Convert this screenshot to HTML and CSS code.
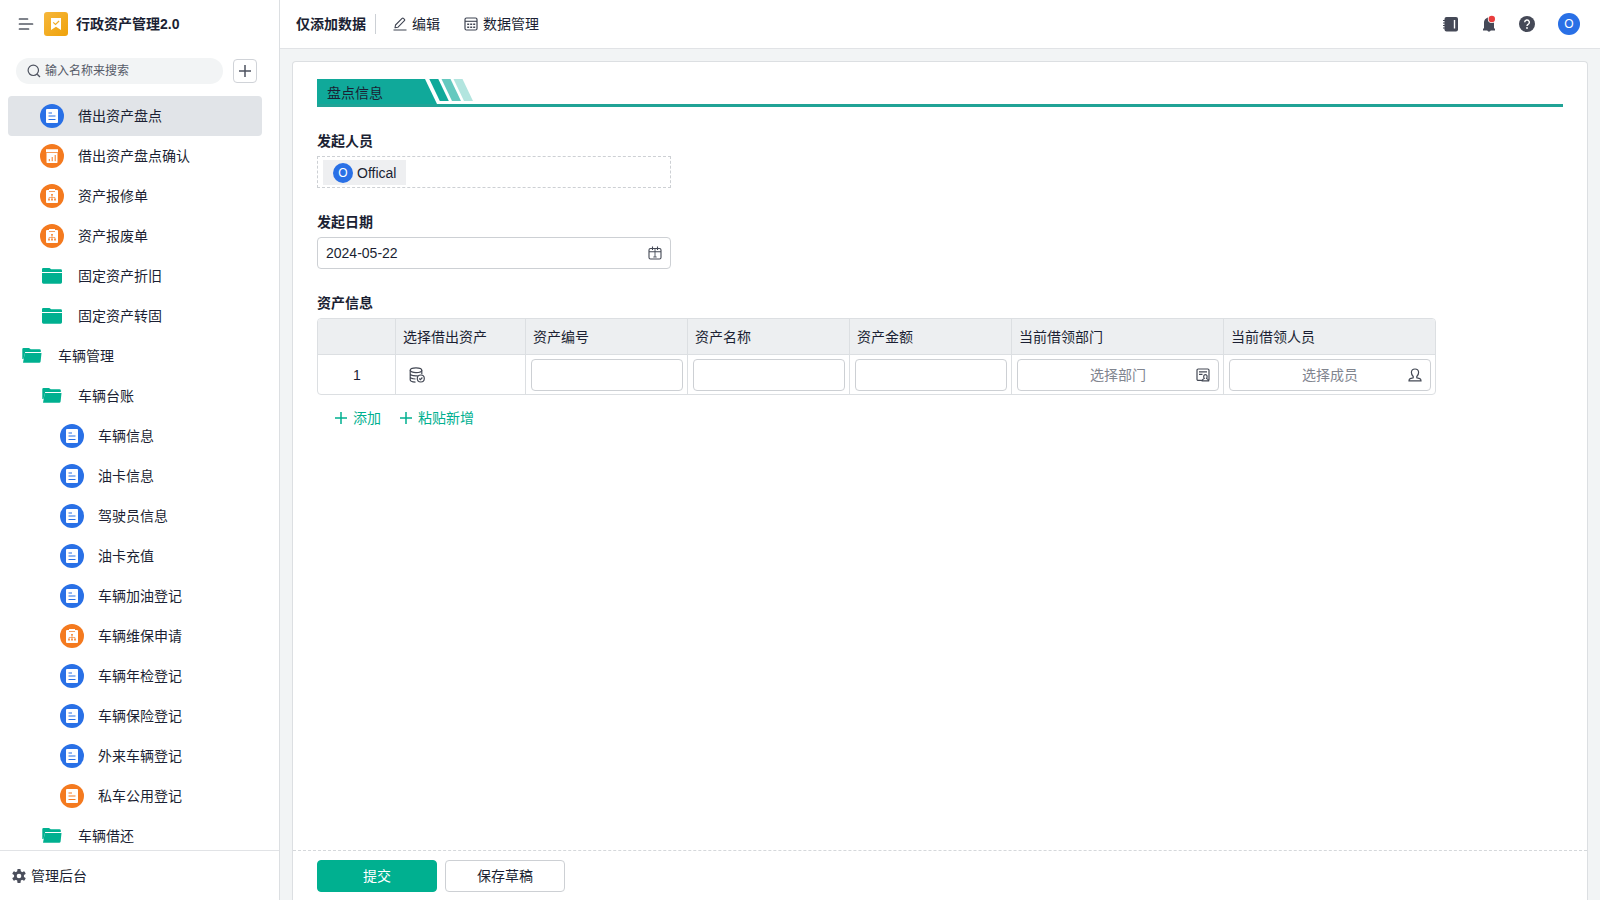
FILE: index.html
```html
<!DOCTYPE html>
<html lang="zh-CN">
<head>
<meta charset="utf-8">
<meta name="viewport" content="width=device-width, initial-scale=1">
<title>行政资产管理2.0</title>
<link rel="stylesheet" href="styles.css">
</head>
<body>
<svg class="sprite" aria-hidden="true">
  <symbol id="i-form" viewBox="0 0 24 24">
    <circle cx="12" cy="12" r="12" fill="currentColor"/>
    <rect x="6" y="5" width="12" height="14" rx="1" fill="#fff"/>
    <path d="M8.500 9h3.500M8.500 12h7M8.500 15.500h7" stroke="currentColor" stroke-width="1.200" fill="none"/>
  </symbol>
  <symbol id="i-chart" viewBox="0 0 24 24">
    <circle cx="12" cy="12" r="12" fill="currentColor"/>
    <path d="M6 5.200h12v3H6zM6.500 9h11v9.300a.8.8 0 0 1-.8.8H7.300a.8.8 0 0 1-.8-.8z" fill="#fff"/>
    <path d="M9.300 15v2.200M12.200 13v4.200M15.200 11v6.200" stroke="currentColor" stroke-width="1" fill="none"/>
  </symbol>
  <symbol id="i-flow" viewBox="0 0 24 24">
    <circle cx="12" cy="12" r="12" fill="currentColor"/>
    <rect x="6" y="6" width="12" height="13" rx="1" fill="#fff"/>
    <rect x="9" y="5" width="6" height="2" fill="#fff"/>
    <path d="M9 7.500h6" stroke="currentColor" stroke-width=".7"/>
    <path d="M12 11v4M9 15v-1.500h6V15" stroke="currentColor" stroke-width=".6" fill="none"/>
    <path d="M11.200 10h1.600v1.600h-1.600zM8.200 14.800h1.600v1.600H8.200zM11.200 14.800h1.600v1.600h-1.600zM14.200 14.800h1.600v1.600h-1.600z" fill="currentColor"/>
  </symbol>
  <symbol id="i-folder" viewBox="0 0 24 24">
    <path d="M2 8V5.200A1.200 1.200 0 0 1 3.200 4h6.300l1.700 1.300h9.300A1.400 1.400 0 0 1 22 6.700V8z" fill="currentColor"/>
    <path d="M2 9h20v9.300a1.400 1.400 0 0 1-1.400 1.400H3.400A1.400 1.400 0 0 1 2 18.300z" fill="currentColor"/>
  </symbol>
  <symbol id="i-open" viewBox="0 0 24 24">
    <path d="M2.300 15V5.200A1.200 1.200 0 0 1 3.500 4h5.500l1.700 1.300h8.800A1.300 1.300 0 0 1 20.800 6.600V8H5.200L3.500 15z" fill="currentColor"/>
    <path d="M4.800 9h16.700l-.9 8.600a1.400 1.400 0 0 1-1.400 1.200H3z" fill="currentColor"/>
  </symbol>
  <symbol id="i-plus" viewBox="0 0 14 14"><path d="M7 1v12M1 7h12" stroke="currentColor" stroke-width="1.500" fill="none"/></symbol>
</svg>
<div class="app">
  <aside class="sidebar">
    <div class="brand">
      <button class="icon-btn" aria-label="收起菜单"><svg width="16" height="14" viewBox="0 0 16 14"><path d="M1.500 2h8M1.500 7h13M1.500 12h9" stroke="#565b66" stroke-width="1.700" stroke-linecap="round"/></svg></button>
      <svg class="logo" width="24" height="24" viewBox="0 0 24 24"><defs><linearGradient id="gold" x1="0" y1="0" x2="1" y2="1"><stop stop-color="#f6b73c"/><stop offset="1" stop-color="#efa20a"/></linearGradient></defs><rect width="24" height="24" rx="3" fill="url(#gold)"/><path d="M7 6h10v12l-5-3.200L7 18z" fill="#fff"/><path d="M9.200 10.300l2.300 2.200 3.600-3.500" stroke="#f0ab24" stroke-width="1.100" fill="none"/></svg>
      <h1 class="brand-name">行政资产管理2.0</h1>
    </div>
    <div class="search-row">
      <label class="search">
        <svg width="14" height="14" viewBox="0 0 14 14"><circle cx="6.300" cy="6.300" r="5.200" fill="none" stroke="#4e5360" stroke-width="1.200"/><path d="M10.200 10.200L13 13" stroke="#4e5360" stroke-width="1.300"/></svg>
        <input class="search-input" type="text" placeholder="输入名称来搜索" aria-label="搜索">
      </label>
      <button class="add-btn" aria-label="新建"><svg width="14" height="14"><use href="#i-plus"/></svg></button>
    </div>
    <nav class="tree">
      <a class="item level-2 active" href="#"><svg class="ico blue"><use href="#i-form"/></svg>借出资产盘点</a>
      <a class="item level-2" href="#"><svg class="ico orange"><use href="#i-chart"/></svg>借出资产盘点确认</a>
      <a class="item level-2" href="#"><svg class="ico orange"><use href="#i-flow"/></svg>资产报修单</a>
      <a class="item level-2" href="#"><svg class="ico orange"><use href="#i-flow"/></svg>资产报废单</a>
      <a class="item level-2" href="#"><svg class="ico green"><use href="#i-folder"/></svg>固定资产折旧</a>
      <a class="item level-2" href="#"><svg class="ico green"><use href="#i-folder"/></svg>固定资产转固</a>
      <a class="item level-1" href="#"><svg class="ico green"><use href="#i-open"/></svg>车辆管理</a>
      <a class="item level-2" href="#"><svg class="ico green"><use href="#i-open"/></svg>车辆台账</a>
      <a class="item level-3" href="#"><svg class="ico blue"><use href="#i-form"/></svg>车辆信息</a>
      <a class="item level-3" href="#"><svg class="ico blue"><use href="#i-form"/></svg>油卡信息</a>
      <a class="item level-3" href="#"><svg class="ico blue"><use href="#i-form"/></svg>驾驶员信息</a>
      <a class="item level-3" href="#"><svg class="ico blue"><use href="#i-form"/></svg>油卡充值</a>
      <a class="item level-3" href="#"><svg class="ico blue"><use href="#i-form"/></svg>车辆加油登记</a>
      <a class="item level-3" href="#"><svg class="ico orange"><use href="#i-flow"/></svg>车辆维保申请</a>
      <a class="item level-3" href="#"><svg class="ico blue"><use href="#i-form"/></svg>车辆年检登记</a>
      <a class="item level-3" href="#"><svg class="ico blue"><use href="#i-form"/></svg>车辆保险登记</a>
      <a class="item level-3" href="#"><svg class="ico blue"><use href="#i-form"/></svg>外来车辆登记</a>
      <a class="item level-3" href="#"><svg class="ico orange"><use href="#i-form"/></svg>私车公用登记</a>
      <a class="item level-2" href="#"><svg class="ico green"><use href="#i-open"/></svg>车辆借还</a>
    </nav>
    <a class="admin" href="#">
      <svg width="14" height="14" viewBox="0 0 14 14"><g fill="#4b4f5c"><circle cx="7" cy="7" r="5"/><rect x="5.300" y="0" width="3.400" height="14" rx=".8"/><rect x="5.300" y="0" width="3.400" height="14" rx=".8" transform="rotate(60 7 7)"/><rect x="5.300" y="0" width="3.400" height="14" rx=".8" transform="rotate(120 7 7)"/></g><circle cx="7" cy="7" r="2.300" fill="#fff"/></svg>
      管理后台
    </a>
  </aside>
  <div class="main">
    <header class="topbar">
      <h2 class="mode">仅添加数据</h2>
      <button class="tool"><svg width="14" height="14" viewBox="0 0 14 14"><path d="M.5 13h13M2 10.800l.5-2.800 6.600-6.600a1 1 0 0 1 1.400 0l.9.9a1 1 0 0 1 0 1.400L4.800 10.300z" fill="none" stroke="#3f4452" stroke-width="1.100" stroke-linejoin="round"/></svg>编辑</button>
      <button class="tool"><svg width="14" height="14" viewBox="0 0 14 14"><rect x="1" y="1" width="12" height="12" rx="1.500" fill="none" stroke="#3f4452" stroke-width="1.200"/><path d="M1 4.300h12" stroke="#3f4452" stroke-width="1.100"/><path d="M3.200 7.200h2m1 0h2m1 0h2M3.200 10.200h2m1 0h2m1 0h2" stroke="#3f4452" stroke-width="1.500"/></svg>数据管理</button>
      <div class="actions">
        <button class="icon-btn" aria-label="通讯录"><svg width="16" height="16" viewBox="0 0 16 16"><rect x="1.500" y="1" width="13.500" height="14.500" rx="2" fill="#454957"/><path d="M0 4.500H3M0 7H3M0 9.500H3M0 12H3" stroke="#454957" stroke-width="1.200"/><path d="M11.500 4v8.500" stroke="#fff" stroke-width="1.400"/></svg></button>
        <button class="icon-btn" aria-label="通知"><svg width="16" height="18" viewBox="0 0 16 18"><path d="M8 2.500C5 2.500 3 4.800 3 7.700V13L2 14v1.500h4.200a2 2 0 0 0 3.600 0H14V14L13 13V7.700C13 4.800 11 2.500 8 2.500z" fill="#454957"/><circle cx="10.800" cy="4" r="4" fill="#fff"/><circle cx="10.800" cy="4" r="3.200" fill="#e93d3d"/></svg></button>
        <button class="icon-btn" aria-label="帮助"><svg width="16" height="16" viewBox="0 0 16 16"><circle cx="8" cy="8" r="8" fill="#454957"/><path d="M5.700 6.300a2.300 2.300 0 1 1 3.400 2c-.8.500-1.100.8-1.100 1.700" fill="none" stroke="#fff" stroke-width="1.400"/><circle cx="8" cy="12" r=".9" fill="#fff"/></svg></button>
        <button class="avatar avatar-user" aria-label="账户">O</button>
      </div>
    </header>
    <main class="page">
      <form class="card">
        <div class="fields">
          <div class="banner"><h3 class="banner-title">盘点信息</h3><svg width="48" height="25" viewBox="0 0 48 25"><path d="M0 0l12 25H0z" fill="#10a99a"/><path d="M4.300 0h9l10.500 22h-9z" fill="#10a99a"/><path d="M16.500 0h9l10.500 22h-9z" fill="#65c9bf"/><path d="M28.500 0h9L48 22h-9z" fill="#b2e5df"/></svg></div>
          <section class="field">
            <h4 class="label">发起人员</h4>
            <div class="people"><span class="chip"><span class="avatar">O</span>Offical</span></div>
          </section>
          <section class="field">
            <label class="label" for="date">发起日期</label>
            <div class="control date-box">
              <input class="input" id="date" type="text" value="2024-05-22">
              <svg width="14" height="14" viewBox="0 0 14 14" fill="none" stroke="#444955" stroke-width="1.100"><rect x="1" y="2.500" width="12" height="10.500" rx="1.500"/><path d="M1 5.700h12M4.500.5v3.500M9.500.5v3.500"/><path d="M7 2.500v8.500M5.300 11h3.400" stroke-width=".9"/></svg>
            </div>
          </section>
          <section class="field">
            <h4 class="label">资产信息</h4>
            <div class="table-wrap">
            <table class="grid">
              <colgroup><col class="c-no"><col class="c-pick"><col class="c-text"><col class="c-text"><col class="c-text"><col class="c-member"><col class="c-member"></colgroup>
              <thead><tr><th></th><th>选择借出资产</th><th>资产编号</th><th>资产名称</th><th>资产金额</th><th>当前借领部门</th><th>当前借领人员</th></tr></thead>
              <tbody><tr>
                <td class="no">1</td>
                <td class="pick"><button class="icon-btn" type="button" aria-label="选择借出资产"><svg width="16" height="16" viewBox="0 0 16 16" fill="none" stroke="#444955" stroke-width="1.200"><ellipse cx="7" cy="3.200" rx="5.800" ry="2.400"/><path d="M1.200 3.200v9.600c0 1.300 2.300 2.200 5.300 2.300M12.800 3.200v4M1.200 6.600c0 1.300 2.600 2.300 5.800 2.300.8 0 1.200 0 1.800-.2M1.200 9.800c0 1.200 2.300 2.100 5.300 2.200"/><circle cx="11.800" cy="11.500" r="3.500"/><path d="M10.200 11.500l1.200 1.200 2-2.200"/></svg></button></td>
                <td><input class="control cell-input" type="text" aria-label="资产编号"></td>
                <td><input class="control cell-input" type="text" aria-label="资产名称"></td>
                <td><input class="control cell-input" type="text" aria-label="资产金额"></td>
                <td><button class="control selector" type="button"><span class="selector-text">选择部门</span><svg width="14" height="14" viewBox="0 0 14 14" fill="none" stroke="#444955" stroke-width="1.200"><path d="M6 12.400H2.200A1.200 1.200 0 0 1 1 11.200V2.200A1.200 1.200 0 0 1 2.200 1h9.600A1.200 1.200 0 0 1 13 2.200v10.200M3 3.800h8M3 6.300h3.500"/><path d="M6.200 12.900c0-1.500 1-2 2-2.400C7.300 9 7.500 6.600 9.400 6.600s2.100 2.400 1.200 3.900c1 .4 2 .9 2 2.400z"/></svg></button></td>
                <td><button class="control selector" type="button"><span class="selector-text">选择成员</span><svg width="14" height="14" viewBox="0 0 14 14" fill="none" stroke="#444955" stroke-width="1.200"><path d="M5.200 8.500C3.800 7 3.300 5.500 3.400 4.300 3.500 2.200 5 1 7 1s3.500 1.200 3.600 3.300c.1 1.200-.4 2.700-1.800 4.200v1.200l3 .9c.8.300 1.200.9 1.200 2.200H1c0-1.300.4-1.900 1.200-2.200l3-.9z"/></svg></button></td>
              </tr></tbody>
            </table>
            </div>
            <div class="links">
              <button class="link-btn" type="button"><svg width="14" height="14"><use href="#i-plus"/></svg>添加</button>
              <button class="link-btn" type="button"><svg width="14" height="14"><use href="#i-plus"/></svg>粘贴新增</button>
            </div>
          </section>
        </div>
        <div class="footer">
          <button class="btn primary" type="button">提交</button>
          <button class="btn" type="button">保存草稿</button>
        </div>
      </form>
    </main>
  </div>
</div>
</body>
</html>
```

FILE: styles.css
```css
* { box-sizing: border-box; }
body {
  margin: 0;
  font: 14px/20px "Liberation Sans", "Noto Sans CJK SC", sans-serif;
  color: #1b1f33;
  background: #f2f4f5;
}
h1, h2, h3, h4 { margin: 0; font-size: 14px; }
button, input { font: inherit; color: inherit; }
button { border: 0; padding: 0; background: none; cursor: pointer; }
a { color: inherit; text-decoration: none; }
svg { flex: none; display: block; }
.sprite { position: absolute; width: 0; height: 0; }

.app { display: flex; height: 100vh; }

/* Sidebar */
.sidebar {
  flex: none;
  display: flex;
  flex-direction: column;
  width: 280px;
  background: #fff;
  border-right: 1px solid #dcdfe2;
}
.brand { display: flex; align-items: center; height: 48px; padding-left: 18px; }
.logo { margin-left: 10px; }
.brand-name { margin-left: 8px; }
.icon-btn { display: flex; align-items: center; justify-content: center; }
.search-row { display: flex; align-items: center; gap: 10px; padding: 10px 22px 12px 16px; }
.search {
  flex: 1;
  min-width: 0;
  display: flex;
  align-items: center;
  gap: 4px;
  height: 26px;
  padding: 0 11px;
  border-radius: 13px;
  background: #f2f4f5;
}
.search-input {
  flex: 1;
  min-width: 0;
  padding: 0;
  border: 0;
  outline: 0;
  background: none;
  font-size: 12px;
}
.search-input::placeholder { color: #565b68; opacity: 1; }
.add-btn {
  display: grid;
  place-items: center;
  width: 24px;
  height: 24px;
  border: 1px solid #d0d3d8;
  border-radius: 4px;
  color: #4e5360;
}
.tree { flex: 1; min-height: 0; overflow: hidden; padding: 0 17px 0 8px; }
.item { display: flex; align-items: center; gap: 14px; height: 40px; border-radius: 4px; }
.item.active { background: #e1e4e8; }
.level-1 { padding-left: 12px; }
.level-2 { padding-left: 32px; }
.level-3 { padding-left: 52px; }
.ico { width: 24px; height: 24px; }
.blue { color: #2970e6; }
.orange { color: #f47a1f; }
.green { color: #00b090; }
.admin {
  flex: none;
  display: flex;
  align-items: center;
  gap: 5px;
  height: 50px;
  padding-left: 12px;
  border-top: 1px solid #e1e3e6;
}

/* Top bar */
.main { flex: 1; min-width: 0; display: flex; flex-direction: column; }
.topbar {
  flex: none;
  display: flex;
  align-items: center;
  gap: 24px;
  height: 49px;
  padding: 0 20px 0 16px;
  background: #fff;
  border-bottom: 1px solid #e1e3e6;
}
.mode { padding-right: 9px; border-right: 1px solid #ccd0d5; margin-right: -7px; }
.tool { display: flex; align-items: center; gap: 5px; }
.actions { display: flex; align-items: center; gap: 22px; margin-left: auto; }
.avatar {
  display: grid;
  place-items: center;
  width: 20px;
  height: 20px;
  border-radius: 50%;
  background: #2970e6;
  color: #fff;
  font-size: 12px;
}
.avatar-user { width: 22px; height: 22px; margin-left: 1px; }

/* Form card */
.page { flex: 1; min-height: 0; display: flex; padding: 12px 12px 0; }
.card {
  flex: 1;
  min-width: 0;
  display: flex;
  flex-direction: column;
  background: #fff;
  border: 1px solid #dcdfe2;
  border-bottom: 0;
  border-radius: 4px 4px 0 0;
}
.fields { flex: 1; min-height: 0; overflow: auto; padding: 17px 24px; }
.banner { display: flex; height: 28px; margin-bottom: 24px; border-bottom: 3px solid #20a396; }
.banner-title { width: 108px; padding: 4px 0 0 10px; height: 25px; font-weight: 400; background: #10a99a; }
.field { margin-bottom: 24px; }
.label { display: block; margin-bottom: 5px; font-weight: 700; }
.people { max-width: 354px; height: 32px; padding: 3px 5px; border: 1px dashed #cdd0d4; }
.chip {
  display: inline-flex;
  align-items: center;
  gap: 4px;
  height: 25px;
  padding: 0 10px;
  background: #eeeff1;
}
.control { height: 32px; border: 1px solid #cdd0d4; border-radius: 4px; background: #fff; }
.date-box { display: flex; align-items: center; max-width: 354px; padding: 0 8px; }
.input { flex: 1; min-width: 0; padding: 0; border: 0; outline: 0; }

/* Asset table */
.table-wrap { max-width: 1119px; border: 1px solid #dcdfe2; border-radius: 4px; overflow: hidden; }
.grid { width: 100%; table-layout: fixed; border-collapse: separate; border-spacing: 0; }
.c-no { width: 77px; }
.c-pick { width: 130px; }
.c-text { width: 162px; }
.c-member { width: 212px; }
.grid th { height: 36px; padding: 0 7px; text-align: left; font-weight: 400; background: #edeff1; border-bottom: 1px solid #dcdfe2; }
.grid td { height: 39px; padding: 0 4px 0 5px; }
.grid th + th, .grid td + td { border-left: 1px solid #dcdfe2; }
.grid .no { text-align: center; }
.grid .pick { padding-left: 13px; }
.cell-input { display: block; width: 100%; }
.selector { display: flex; align-items: center; width: 100%; padding: 0 8px 0 22px; color: #81858f; }
.selector-text { flex: 1; }
.links { display: flex; gap: 18px; margin-top: 13px; padding-left: 17px; }
.link-btn { display: flex; align-items: center; gap: 5px; color: #00b090; }

/* Submit bar */
.footer { flex: none; display: flex; gap: 8px; height: 50px; padding: 9px 24px; border-top: 1px dashed #d5d8db; }
.btn { width: 120px; height: 32px; border: 1px solid #cdd0d4; border-radius: 4px; background: #fff; }
.primary { border-color: #00b090; background: #00b090; color: #fff; }
```
